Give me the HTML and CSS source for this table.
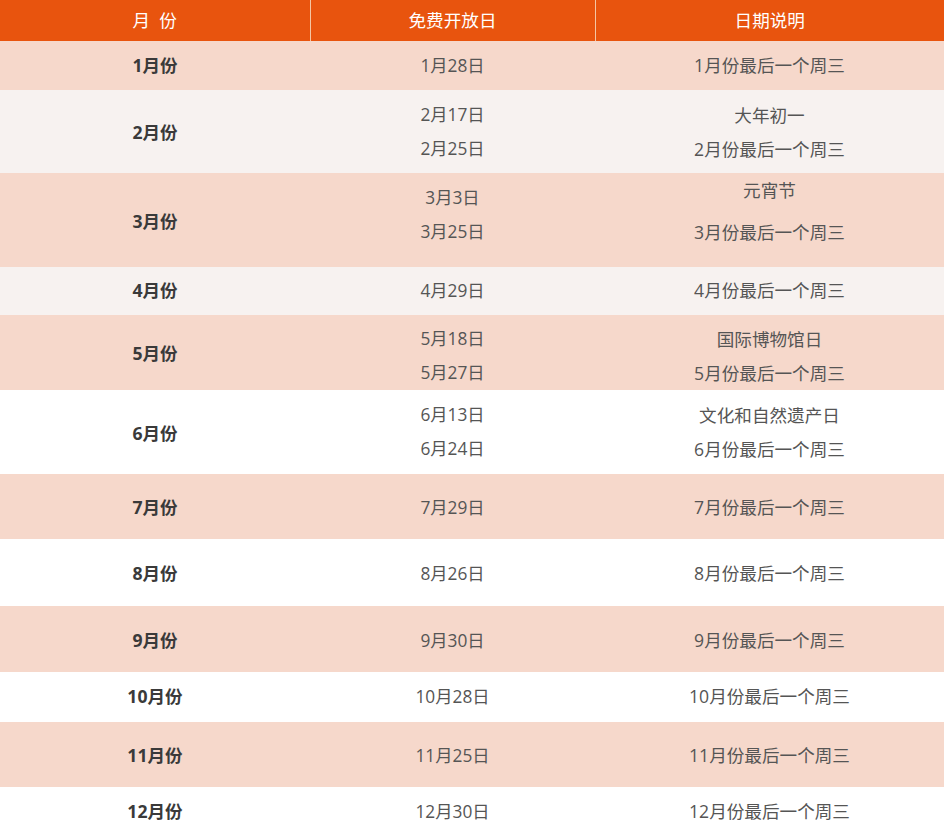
FILE: index.html
```html
<!DOCTYPE html>
<html lang="zh-CN">
<head>
<meta charset="utf-8">
<title>免费开放日</title>
<link rel="stylesheet" href="styles.css">
</head>
<body>
<table class="schedule">
  <colgroup>
    <col class="c-month">
    <col class="c-date">
    <col class="c-desc">
  </colgroup>
  <thead>
    <tr class="head">
      <th>月&nbsp;&nbsp;份</th>
      <th>免费开放日</th>
      <th>日期说明</th>
    </tr>
  </thead>
  <tbody>
    <tr class="r1 peach raise">
      <td class="month">1月份</td>
      <td class="date">1月28日</td>
      <td class="desc">1月份最后一个周三</td>
    </tr>
    <tr class="r2 light">
      <td class="month">2月份</td>
      <td class="date"><div class="line">2月17日</div><div class="line">2月25日</div></td>
      <td class="desc"><div class="line">大年初一</div><div class="line">2月份最后一个周三</div></td>
    </tr>
    <tr class="r3 peach">
      <td class="month">3月份</td>
      <td class="date top-d"><div class="line">3月3日</div><div class="line">3月25日</div></td>
      <td class="desc top-x"><div class="line">元宵节</div><div class="line gap">3月份最后一个周三</div></td>
    </tr>
    <tr class="r4 light raise">
      <td class="month">4月份</td>
      <td class="date">4月29日</td>
      <td class="desc">4月份最后一个周三</td>
    </tr>
    <tr class="r5 peach">
      <td class="month">5月份</td>
      <td class="date shift"><div class="line">5月18日</div><div class="line">5月27日</div></td>
      <td class="desc shift"><div class="line">国际博物馆日</div><div class="line">5月份最后一个周三</div></td>
    </tr>
    <tr class="r6 white">
      <td class="month">6月份</td>
      <td class="date"><div class="line">6月13日</div><div class="line">6月24日</div></td>
      <td class="desc"><div class="line">文化和自然遗产日</div><div class="line">6月份最后一个周三</div></td>
    </tr>
    <tr class="r7 peach">
      <td class="month">7月份</td>
      <td class="date">7月29日</td>
      <td class="desc">7月份最后一个周三</td>
    </tr>
    <tr class="r8 white">
      <td class="month">8月份</td>
      <td class="date">8月26日</td>
      <td class="desc">8月份最后一个周三</td>
    </tr>
    <tr class="r9 peach">
      <td class="month">9月份</td>
      <td class="date">9月30日</td>
      <td class="desc">9月份最后一个周三</td>
    </tr>
    <tr class="r10 white raise">
      <td class="month">10月份</td>
      <td class="date">10月28日</td>
      <td class="desc">10月份最后一个周三</td>
    </tr>
    <tr class="r11 peach">
      <td class="month">11月份</td>
      <td class="date">11月25日</td>
      <td class="desc">11月份最后一个周三</td>
    </tr>
    <tr class="r12 white raise-s">
      <td class="month">12月份</td>
      <td class="date">12月30日</td>
      <td class="desc">12月份最后一个周三</td>
    </tr>
  </tbody>
</table>
</body>
</html>
```

FILE: styles.css
```css
html, body {
  margin: 0;
  padding: 0;
  background: #ffffff;
}

body {
  font-family: "Open Sans", "Noto Sans CJK SC", sans-serif;
  color: #555555;
}

.schedule {
  width: 944px;
  table-layout: fixed;
  border-collapse: collapse;
  border-spacing: 0;
}

.c-month { width: 310px; }
.c-date { width: 285px; }
.c-desc { width: 349px; }

.schedule th,
.schedule td {
  padding: 0;
  text-align: center;
  vertical-align: middle;
  white-space: nowrap;
}

.head {
  height: 41px;
}

.head th {
  background: #e8540e;
  color: #ffffff;
  font-size: 17.6px;
  font-weight: normal;
  line-height: 20px;
  padding-bottom: 1px;
}

.head th + th {
  border-left: 1px solid #f4c6a4;
}

.peach td { background: #f6d8cb; }
.light td { background: #f7f2f0; }
.white td { background: #ffffff; }

.month {
  font-size: 17.6px;
  font-weight: bold;
  color: #3a3a3a;
}

.date {
  font-size: 17.3px;
  color: #555555;
}

.desc {
  font-size: 17.6px;
  color: #555555;
}

.line {
  line-height: 34px;
}

.line.gap {
  margin-top: 8px;
}

.r1 { height: 49px; }
.r2 { height: 83px; }
.r3 { height: 94px; }
.r4 { height: 48px; }
.r5 { height: 75px; }
.r6 { height: 84px; }
.r7 { height: 65px; }
.r8 { height: 67px; }
.r9 { height: 66px; }
.r10 { height: 50px; }
.r11 { height: 65px; }
.r12 { height: 48px; }

.raise td { padding-bottom: 3px; }
.raise-s td { padding-bottom: 2px; }

.schedule td.top-d {
  vertical-align: top;
  padding-top: 8px;
}

.schedule td.top-x {
  vertical-align: top;
  padding-top: 0;
}

.schedule td.shift {
  padding-top: 7px;
}
```
